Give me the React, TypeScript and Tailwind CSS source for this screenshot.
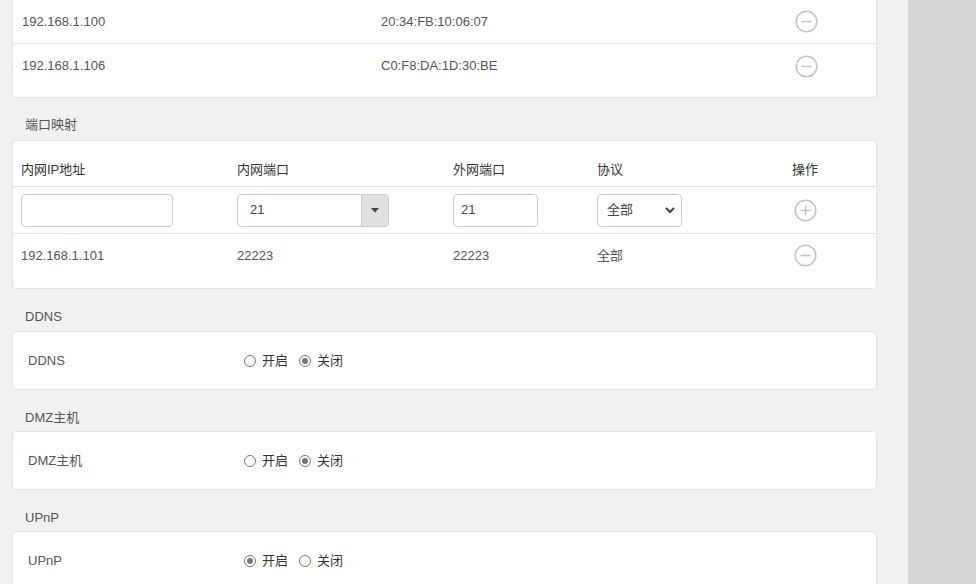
import React from "react";

const font = { fontFamily: '"Liberation Sans", Arial, "Noto Sans CJK SC", sans-serif' };

function MinusIcon() {
  return (
    <svg width="23" height="23" viewBox="0 0 23 23">
      <circle cx="11.5" cy="11.5" r="10.3" fill="none" stroke="#c4c4c4" strokeWidth="1.5" />
      <line x1="6.5" y1="11.5" x2="16.5" y2="11.5" stroke="#c4c4c4" strokeWidth="1.5" />
    </svg>
  );
}

function PlusIcon() {
  return (
    <svg width="23" height="23" viewBox="0 0 23 23">
      <circle cx="11.5" cy="11.5" r="10.3" fill="none" stroke="#c4c4c4" strokeWidth="1.5" />
      <line x1="6.5" y1="11.5" x2="16.5" y2="11.5" stroke="#c4c4c4" strokeWidth="1.5" />
      <line x1="11.5" y1="6.5" x2="11.5" y2="16.5" stroke="#c4c4c4" strokeWidth="1.5" />
    </svg>
  );
}

function Radio({ checked }: { checked: boolean }) {
  return (
    <span className="w-[12px] h-[12px] rounded-full border border-[#777] bg-white flex items-center justify-center">
      {checked && <span className="w-[6px] h-[6px] rounded-full bg-[#777]" />}
    </span>
  );
}

function Title({ children, short = false, low = false }: { children: React.ReactNode; short?: boolean; low?: boolean }) {
  return (
    <div className={`pl-[13px] text-[13px] leading-[16px] text-[#555] ${low ? "pt-[20px]" : "pt-[19px]"} ${short ? "h-[41px]" : "h-[42px]"}`}>{children}</div>
  );
}

function SettingCard({ label, on }: { label: string; on: boolean }) {
  return (
    <div className="bg-white border border-[#e3e3e3] rounded-[4px] h-[59px] flex items-center pl-[15px] text-[13px] text-[#555]">
      <div className="w-[216px]">{label}</div>
      <div className="flex items-center">
        <Radio checked={on} />
        <span className="ml-[6px] text-[#333]">开启</span>
        <span className="ml-[11px]"><Radio checked={!on} /></span>
        <span className="ml-[6px] text-[#333]">关闭</span>
      </div>
    </div>
  );
}

export default function App() {
  return (
    <div className="flex w-[976px] h-[584px] overflow-hidden" style={font}>
      <div className="w-[908px] bg-[#f1f1f1] pl-[12px] pr-[31px]">
        {/* first card (cut at top) */}
        <div className="bg-white border border-t-0 border-[#e3e3e3] rounded-b-[4px] pb-[9px] text-[13px] text-[#555]">
          <div className="h-[44px] flex items-center pl-[9px] border-b border-[#e6e6e6]">
            <div className="w-[359px]">192.168.1.100</div>
            <div className="w-[399px]">20:34:FB:10:06:07</div>
            <div className="w-[52px] flex justify-center"><MinusIcon /></div>
          </div>
          <div className="h-[44px] flex items-center pl-[9px]">
            <div className="w-[359px]">192.168.1.106</div>
            <div className="w-[399px]">C0:F8:DA:1D:30:BE</div>
            <div className="w-[52px] flex justify-center"><MinusIcon /></div>
          </div>
        </div>

        <Title>端口映射</Title>
        <div className="bg-white border border-[#e3e3e3] rounded-[4px] pt-[12px] pb-[11px] text-[13px]">
          <div className="h-[34px] flex items-center pl-[8px] border-b border-[#e3e3e3] text-[#333]">
            <div className="w-[216px]">内网IP地址</div>
            <div className="w-[216px]">内网端口</div>
            <div className="w-[144px]">外网端口</div>
            <div className="w-[182px]">协议</div>
            <div className="w-[52px] text-center">操作</div>
          </div>
          <div className="h-[47px] flex items-center pl-[8px] border-b border-[#e6e6e6] text-[#555]">
            <div className="w-[216px]">
              <div className="w-[152px] h-[33px] border border-[#ccc] rounded-[4px] bg-white" />
            </div>
            <div className="w-[216px]">
              <div className="w-[152px] h-[33px] border border-[#ccc] rounded-[4px] bg-white flex overflow-hidden">
                <div className="flex-1 flex items-center pl-[12px] text-[#444]">21</div>
                <div className="w-[27px] bg-[#e0e0e0] border-l border-[#ccc] flex items-center justify-center">
                  <svg width="8" height="5" viewBox="0 0 8 5"><path d="M0 0 L8 0 L4 4.5 Z" fill="#444" /></svg>
                </div>
              </div>
            </div>
            <div className="w-[144px]">
              <div className="w-[85px] h-[33px] border border-[#ccc] rounded-[4px] bg-white flex items-center pl-[7px] text-[#444]">21</div>
            </div>
            <div className="w-[182px]">
              <div className="w-[85px] h-[33px] border border-[#ccc] rounded-[4px] bg-white flex items-center justify-between pl-[9px] pr-[6px] text-[#444]">
                <span>全部</span>
                <svg width="10" height="7" viewBox="0 0 10 7"><path d="M1 1 L5 5 L9 1" fill="none" stroke="#444" strokeWidth="2" /></svg>
              </div>
            </div>
            <div className="w-[52px] flex justify-center"><PlusIcon /></div>
          </div>
          <div className="h-[43px] flex items-center pl-[8px] text-[#555]">
            <div className="w-[216px]">192.168.1.101</div>
            <div className="w-[216px]">22223</div>
            <div className="w-[144px]">22223</div>
            <div className="w-[182px]">全部</div>
            <div className="w-[52px] flex justify-center"><MinusIcon /></div>
          </div>
        </div>

        <Title low>DDNS</Title>
        <SettingCard label="DDNS" on={false} />
        <Title short low>DMZ主机</Title>
        <SettingCard label="DMZ主机" on={false} />
        <Title short low>UPnP</Title>
        <SettingCard label="UPnP" on={true} />
      </div>
      <div className="flex-1 bg-[#d6d6d6]" />
    </div>
  );
}
